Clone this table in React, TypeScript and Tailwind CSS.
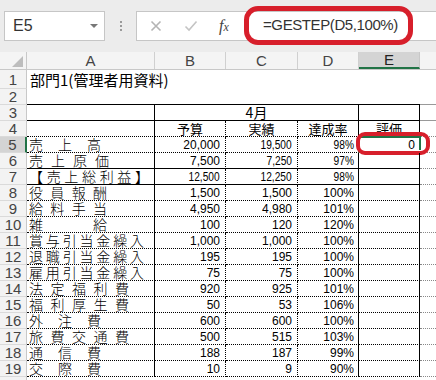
import type { ReactNode } from "react";

const JP = "font-['Noto_Sans_CJK_JP',sans-serif]";
const NUM = "font-['Liberation_Sans',sans-serif]";

const R_SOLID = "border-r border-r-black";
const R_DOT = "border-r border-r-black [border-right-style:dotted]!";
const B_SOLID = "border-b border-b-black";
const B_DOT = "border-b border-b-black [border-bottom-style:dotted]!";

interface Line {
  n: number;
  label: string;
  lw: string;
  b: string;
  c: string;
  d: string;
  bSmall?: boolean;
  small?: boolean;
  solid?: boolean;
}

const lines: Line[] = [
  { n: 5, label: "売上高", lw: "w-[72px]", b: "20,000", c: "19,500", d: "98%", small: true },
  { n: 6, label: "売上原価", lw: "w-[80px]", b: "7,500", c: "7,250", d: "97%", small: true, solid: true },
  { n: 7, label: "【売上総利益】", lw: "w-[120px]", b: "12,500", c: "12,250", d: "98%", small: true, bSmall: true, solid: true },
  { n: 8, label: "役員報酬", lw: "w-[78px]", b: "1,500", c: "1,500", d: "100%" },
  { n: 9, label: "給料手当", lw: "w-[78px]", b: "4,950", c: "4,980", d: "101%" },
  { n: 10, label: "雑給", lw: "w-[78px]", b: "100", c: "120", d: "120%" },
  { n: 11, label: "賞与引当金繰入", lw: "w-[115px]", b: "1,000", c: "1,000", d: "100%" },
  { n: 12, label: "退職引当金繰入", lw: "w-[115px]", b: "195", c: "195", d: "100%" },
  { n: 13, label: "雇用引当金繰入", lw: "w-[115px]", b: "75", c: "75", d: "100%" },
  { n: 14, label: "法定福利費", lw: "w-[100px]", b: "920", c: "925", d: "101%" },
  { n: 15, label: "福利厚生費", lw: "w-[100px]", b: "50", c: "53", d: "106%" },
  { n: 16, label: "外注費", lw: "w-[72px]", b: "600", c: "600", d: "100%" },
  { n: 17, label: "旅費交通費", lw: "w-[100px]", b: "500", c: "515", d: "103%" },
  { n: 18, label: "通信費", lw: "w-[72px]", b: "188", c: "187", d: "99%" },
  { n: 19, label: "交際費", lw: "w-[72px]", b: "10", c: "9", d: "90%" },
];

function Num({ v, small }: { v: string; small?: boolean }) {
  return (
    <span className={`${NUM} text-[12px] leading-[14px] text-black ${small ? "inline-block origin-right scale-x-[0.85]" : ""}`}>
      {v}
    </span>
  );
}

function RowHead({ n, active }: { n?: number; active?: boolean }) {
  return (
    <div
      className={`w-[27px] shrink-0 h-full flex items-center justify-center text-[15px] leading-[15px] text-[#444] ${NUM} border-b border-b-[#dadada] ${
        active ? "bg-[#d4d4d4] border-r-2 border-r-[#217346]" : "bg-[#f3f3f3] border-r border-r-[#c8c8c8]"
      }`}
    >
      {n}
    </div>
  );
}

function Row({ h, children }: { h: string; children: ReactNode }) {
  return <div className={`flex ${h}`}>{children}</div>;
}

export default function App() {
  return (
    <div className="w-[436px] h-[380px] overflow-hidden bg-white">
      {/* formula bar */}
      <div className="relative h-[52px] bg-[#ececec] flex items-start pt-[11px] pl-[4px]">
        <div className="w-[101px] h-[30px] bg-white border border-[#c6c6c6] flex items-center justify-between pl-[8px] pr-[6px]">
          <span className={`${NUM} text-[16px] text-[#333]`}>E5</span>
          <span className="w-0 h-0 border-l-[4px] border-r-[4px] border-t-[4px] border-l-transparent border-r-transparent border-t-[#777]" />
        </div>
        <div className="w-[31px] h-[30px] flex flex-col items-center justify-center gap-[2px]">
          <span className="w-[2px] h-[2px] bg-[#9a9a9a]" />
          <span className="w-[2px] h-[2px] bg-[#9a9a9a]" />
          <span className="w-[2px] h-[2px] bg-[#9a9a9a]" />
        </div>
        <div className="flex-1 h-[30px] bg-white border border-r-0 border-[#c6c6c6] flex items-center">
          <svg width="12" height="12" viewBox="0 0 12 12" className="ml-[13px]">
            <path d="M1.5 1.5 L10.5 10.5 M10.5 1.5 L1.5 10.5" stroke="#b4b4b4" strokeWidth="1.6" fill="none" />
          </svg>
          <svg width="14" height="12" viewBox="0 0 14 12" className="ml-[22px]">
            <path d="M1.5 6.5 L5 10 L12.5 1.5" stroke="#c4c4c4" strokeWidth="1.6" fill="none" />
          </svg>
          <span className="ml-[21px] font-['Liberation_Serif',serif] italic text-[16px] text-[#444] leading-none">
            f<span className="text-[12px]">x</span>
          </span>
        </div>
        <div className="absolute left-[244px] top-[6px] w-[169px] h-[39px] border-[5px] border-[#d71f2b] rounded-[14px] flex items-center pl-[14px]">
          <span className={`${NUM} text-[15px] tracking-[-0.4px] text-[#333] whitespace-nowrap`}>=GESTEP(D5,100%)</span>
        </div>
      </div>

      {/* column headers */}
      <div className={`flex h-[18px] bg-[#f4f4f4] border-b border-b-[#c8c8c8] text-[15px] leading-[15px] text-[#444] ${NUM}`}>
        <div className="w-[27px] shrink-0 border-r border-r-[#c8c8c8] flex items-end justify-end pr-[3px] pb-[2px]">
          <svg width="11" height="11" viewBox="0 0 11 11">
            <path d="M11 0 L11 11 L0 11 Z" fill="#bdbdbd" />
          </svg>
        </div>
        <div className="w-[128px] shrink-0 border-r border-r-[#d0d0d0] flex items-center justify-center">A</div>
        <div className="w-[71px] shrink-0 border-r border-r-[#d0d0d0] flex items-center justify-center">B</div>
        <div className="w-[72px] shrink-0 border-r border-r-[#d0d0d0] flex items-center justify-center">C</div>
        <div className="w-[61px] shrink-0 border-r border-r-[#d0d0d0] flex items-center justify-center">D</div>
        <div className="w-[61px] shrink-0 bg-[#d4d4d4] border-b-2 border-b-[#217346] border-r border-r-[#c8c8c8] flex items-center justify-center text-[#222]">
          E
        </div>
        <div className="flex-1" />
      </div>

      {/* row 1 */}
      <Row h="h-[19px]">
        <RowHead n={1} />
        <div className={`w-[128px] shrink-0 flex items-center pl-[3px] whitespace-nowrap overflow-visible ${JP} text-[15px] leading-[17px]`}>
          部門1(管理者用資料)
        </div>
        <div className="flex-1" />
      </Row>

      {/* row 2 */}
      <Row h="h-[16px]">
        <RowHead n={2} />
        <div className={`w-[393px] shrink-0 ${B_SOLID}`} />
        <div className="flex-1 border-b border-b-[#999]" />
      </Row>

      {/* row 3 */}
      <Row h="h-[16px]">
        <RowHead n={3} />
        <div className={`w-[128px] shrink-0 ${R_SOLID} ${B_SOLID}`} />
        <div className={`w-[204px] shrink-0 ${R_SOLID} ${B_SOLID} flex items-center justify-center ${JP} text-[14px] leading-[15px]`}>
          4月
        </div>
        <div className={`w-[61px] shrink-0 ${R_SOLID} ${B_SOLID}`} />
        <div className="flex-1 border-b border-b-[#999]" />
      </Row>

      {/* row 4 */}
      <Row h="h-[16px]">
        <RowHead n={4} />
        <div className={`w-[128px] shrink-0 ${R_SOLID} ${B_DOT}`} />
        <div className={`w-[71px] shrink-0 ${R_DOT} ${B_DOT} flex items-center justify-center ${JP} text-[13px] leading-[15px]`}>予算</div>
        <div className={`w-[72px] shrink-0 ${R_DOT} ${B_DOT} flex items-center justify-center ${JP} text-[13px] leading-[15px]`}>実績</div>
        <div className={`w-[61px] shrink-0 ${R_SOLID} ${B_DOT} flex items-center justify-center ${JP} text-[13px] leading-[15px]`}>達成率</div>
        <div className={`w-[61px] shrink-0 ${R_SOLID} ${B_DOT} flex items-center justify-center ${JP} text-[13px] leading-[15px]`}>評価</div>
        <div className="flex-1 border-b border-b-[#888] [border-bottom-style:dotted]!" />
      </Row>

      {lines.map((l) => {
        const bot = l.solid ? B_SOLID : B_DOT;
        return (
          <Row key={l.n} h="h-[16px]">
            <RowHead n={l.n} active={l.n === 5} />
            <div className={`w-[128px] shrink-0 ${R_SOLID} ${bot} flex items-center pl-[2px]`}>
              <span className={`flex justify-between ${l.lw} ${JP} text-[14px] leading-[15px] font-light`}>
                {[...l.label].map((ch, i) => (
                  <span key={i}>{ch}</span>
                ))}
              </span>
            </div>
            <div className={`w-[71px] shrink-0 ${R_DOT} ${bot} flex items-center justify-end pr-[5px]`}>
              <Num v={l.b} small={l.bSmall} />
            </div>
            <div className={`w-[72px] shrink-0 ${R_DOT} ${bot} flex items-center justify-end pr-[5px]`}>
              <Num v={l.c} small={l.small} />
            </div>
            <div className={`w-[61px] shrink-0 ${R_SOLID} ${bot} flex items-center justify-end pr-[4px]`}>
              <Num v={l.d} small={l.small} />
            </div>
            <div className={`relative w-[61px] shrink-0 ${R_SOLID} ${bot} flex items-center justify-end pr-[4px]`}>
              {l.n === 5 && (
                <>
                  <Num v="0" />
                  <div className="absolute -left-[1px] -top-[1px] w-[63px] h-[17px] border-2 border-[#217346]" />
                  <div className="absolute -right-[3px] -bottom-[3px] w-[5px] h-[5px] bg-[#217346] border border-white" />
                  <div className="absolute -left-[3px] -top-[5px] w-[74px] h-[23px] border-4 border-[#d71f2b] rounded-[9px]" />
                </>
              )}
            </div>
            <div className="flex-1 border-b border-b-[#888] [border-bottom-style:dotted]!" />
          </Row>
        );
      })}

      <Row h="h-[16px]">
        <RowHead />
        <div className="flex-1" />
      </Row>
    </div>
  );
}
